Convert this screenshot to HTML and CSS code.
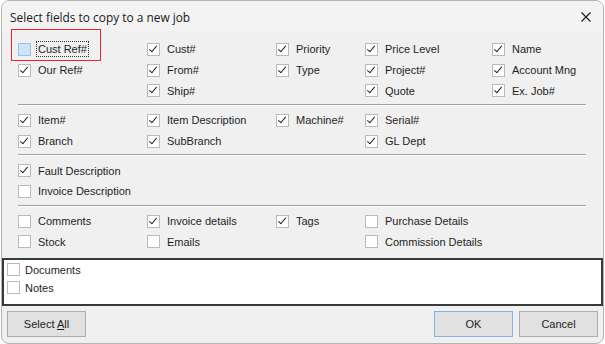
FILE: index.html
```html
<!DOCTYPE html>
<html lang="en">
<head>
    <meta charset="UTF-8">
    <title>Select fields to copy to a new job</title>
    <link rel="stylesheet" href="styles.css">
</head>
<body>
    <div class="dialog">
        <div class="titlebar">
            <span class="title">Select fields to copy to a new job</span>
            <svg class="close" width="10" height="10" viewBox="0 0 10 10">
                <path d="M0.5 0.5 L9.5 9.5 M9.5 0.5 L0.5 9.5" stroke="#1a1a1a" stroke-width="1.1" fill="none"/>
            </svg>
        </div>

        <div class="fields">
            <div class="grid">
                <label class="chk focus-hi"><span class="box hover"></span><span class="txt focus">Cust Ref#</span></label>
                <label class="chk"><span class="box on"></span>Cust#</label>
                <label class="chk"><span class="box on"></span>Priority</label>
                <label class="chk"><span class="box on"></span>Price Level</label>
                <label class="chk"><span class="box on"></span>Name</label>

                <label class="chk"><span class="box on"></span>Our Ref#</label>
                <label class="chk"><span class="box on"></span>From#</label>
                <label class="chk"><span class="box on"></span>Type</label>
                <label class="chk"><span class="box on"></span>Project#</label>
                <label class="chk"><span class="box on"></span>Account Mng</label>

                <span></span>
                <label class="chk"><span class="box on"></span>Ship#</label>
                <span></span>
                <label class="chk"><span class="box on"></span>Quote</label>
                <label class="chk"><span class="box on"></span>Ex. Job#</label>
            </div>
            <div class="sep"></div>
            <div class="grid">
                <label class="chk"><span class="box on"></span>Item#</label>
                <label class="chk"><span class="box on"></span>Item Description</label>
                <label class="chk"><span class="box on"></span>Machine#</label>
                <label class="chk"><span class="box on"></span>Serial#</label>
                <span></span>

                <label class="chk"><span class="box on"></span>Branch</label>
                <label class="chk"><span class="box on"></span>SubBranch</label>
                <span></span>
                <label class="chk"><span class="box on"></span>GL Dept</label>
                <span></span>
            </div>
            <div class="sep"></div>
            <div class="grid">
                <label class="chk wide"><span class="box on"></span>Fault Description</label>
                <label class="chk wide"><span class="box"></span>Invoice Description</label>
            </div>
            <div class="sep"></div>
            <div class="grid">
                <label class="chk"><span class="box"></span>Comments</label>
                <label class="chk"><span class="box on"></span>Invoice details</label>
                <label class="chk"><span class="box on"></span>Tags</label>
                <label class="chk"><span class="box"></span>Purchase Details</label>
                <span></span>

                <label class="chk"><span class="box"></span>Stock</label>
                <label class="chk"><span class="box"></span>Emails</label>
                <span></span>
                <label class="chk"><span class="box"></span>Commission Details</label>
                <span></span>
            </div>
        </div>

        <div class="panel">
            <label class="item"><span class="box"></span>Documents</label>
            <label class="item"><span class="box"></span>Notes</label>
        </div>

        <div class="buttons">
            <button class="btn">Select <u>A</u>ll</button>
            <span class="spacer"></span>
            <button class="btn default">OK</button>
            <button class="btn">Cancel</button>
        </div>
    </div>
</body>
</html>
```

FILE: styles.css
```css
body {
    margin: 0;
    background: #ffffff;
    font-family: "Liberation Sans", Arial, sans-serif;
    color: #1e1e1e;
}
.dialog {
    margin-left: 1px;
    width: 601px;
    height: 342px;
    background: #f0f0f0;
    border: 1px solid #b4b4b4;
    border-radius: 8px;
    overflow: hidden;
    display: flex;
    flex-direction: column;
}
.titlebar {
    height: 30px;
    display: flex;
    align-items: center;
    justify-content: space-between;
    padding: 0 12px 0 8px;
    background: #f3f3f3;
}
.title {
    font-family: "Open Sans", "Noto Sans", sans-serif;
    font-size: 11.9px;
    color: #1a1a1a;
    padding-top: 1px;
}
.close {
    margin-top: 1px;
}
.fields {
    padding: 8px 17px 0 16px;
}
.grid {
    display: grid;
    grid-template-columns: 129px 129px 89px 127px 1fr;
    grid-auto-rows: 20.7px;
}
.chk {
    display: flex;
    align-items: center;
    font-size: 11px;
    white-space: nowrap;
    position: relative;
}
.chk.wide {
    grid-column: 1 / -1;
}
.box {
    width: 11px;
    height: 11px;
    border: 1px solid #bababa;
    background: #fff;
    margin-right: 7px;
    flex: none;
    position: relative;
}
.box.on::after {
    content: "";
    position: absolute;
    left: 3px;
    top: 0px;
    width: 3px;
    height: 7px;
    border-right: 1.8px solid #222;
    border-bottom: 1.8px solid #222;
    transform: rotate(40deg);
    transform-origin: center;
}
.box.hover {
    background: #cce4f7;
    border-color: #9cc4e8;
}
.txt.focus {
    outline: 1px dotted #333;
    outline-offset: 0;
    padding: 1px 1px;
    margin-left: -1px;
}
.focus-hi::before {
    content: "";
    position: absolute;
    left: -7px;
    top: -10px;
    width: 88px;
    height: 30px;
    border: 1.5px solid #e8262c;
}
.sep {
    margin: 3px 0 4px 0;
    border-top: 1px solid #a0a0a0;
    border-bottom: 1px solid #ffffff;
}
.panel {
    margin-top: 6px;
    height: 43px;
    background: #fff;
    border: 2px solid #3a3a3a;
    padding: 1px 0 0 3px;
    display: flex;
    flex-direction: column;
}
.item {
    display: flex;
    align-items: center;
    height: 17.6px;
    font-size: 11px;
}
.item .box {
    margin-right: 5px;
}
.buttons {
    display: flex;
    gap: 6px;
    padding: 5px 5px 0 5px;
}
.spacer {
    flex: 1;
}
.btn {
    width: 79px;
    height: 26px;
    background: #e1e1e1;
    border: 1px solid #adadad;
    font-family: "Liberation Sans", Arial, sans-serif;
    font-size: 11px;
    color: #1e1e1e;
    padding: 0;
}
.btn.default {
    border-color: #7eb4ea;
}
```
